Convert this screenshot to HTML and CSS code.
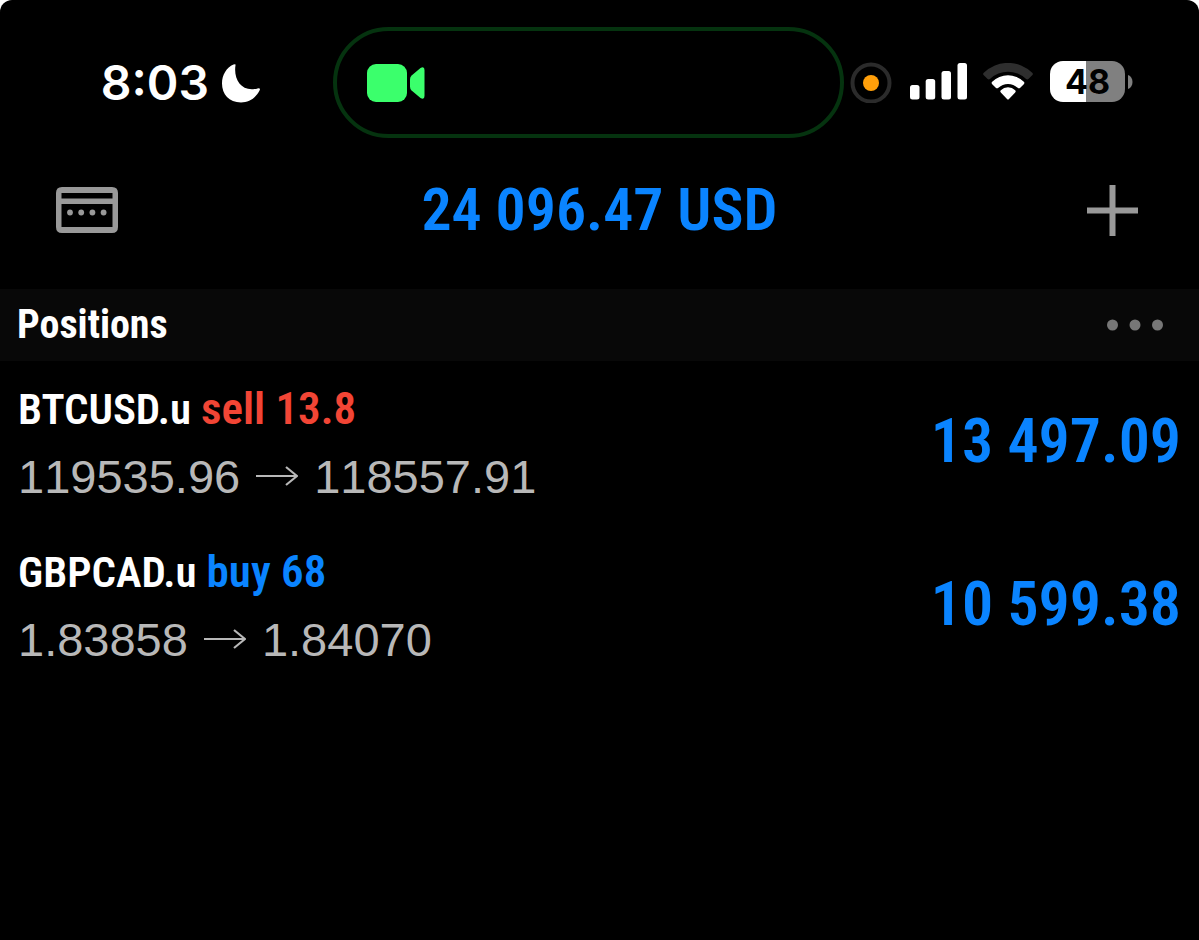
FILE: index.html
```html
<!DOCTYPE html>
<html lang="en">
<head>
<meta charset="utf-8">
<meta name="viewport" content="width=device-width, initial-scale=1">
<title>Positions</title>
<link rel="stylesheet" href="styles.css">
</head>
<body>
<div class="app">
  <div class="status">
    <div class="status-left">
      <time class="clock">8:03</time>
      <svg class="moon" width="40" height="40" viewBox="0 0 40 40" aria-label="Focus on"><path d="M14.500 2.200C12.500 15 19 27 32 26.200Q35 26 36.500 25.400Q39.500 24.500 38.800 27C35 35 28 39.500 20 39.500C8 39.500 1 31 1 20.500C1 12 5.500 4.500 12.500 1.500Q15 .5 14.500 2.200Z" fill="#fff"/></svg>
    </div>
    <div class="island">
      <svg width="58" height="38" viewBox="0 0 58 38" aria-label="Camera in use"><rect width="40" height="38" rx="9" fill="#3bff6c"/><path d="M43 15.500Q43 13 44.600 11.500L53.500 3.900Q57.500 2 57.500 6V32Q57.500 36 53.500 34.100L44.600 26.500Q43 25 43 22.500Z" fill="#3bff6c"/></svg>
    </div>
    <div class="status-right">
      <svg width="42" height="42" viewBox="0 0 42 42" aria-label="Microphone in use"><circle cx="21" cy="22" r="18.500" fill="none" stroke="#2b2b2b" stroke-width="4"/><circle cx="21" cy="22" r="8" fill="#ff9f0a"/></svg>
      <svg class="signal" width="58" height="37" viewBox="0 0 58 37" aria-label="Signal" fill="#fff"><rect y="22" width="9.500" height="14.500" rx="2.500"/><rect x="15.700" y="16" width="9.500" height="20.500" rx="2.500"/><rect x="31.500" y="8" width="9.500" height="28.500" rx="2.500"/><rect x="47.500" width="9.500" height="36.500" rx="2.500"/></svg>
      <svg class="wifi" width="50" height="38" viewBox="0 0 50 38" aria-label="Wi-Fi"><path d="M.8 9.800Q-.5 11 .8 12.300L4.600 16Q5.800 17 7.200 15.800A26 26 0 0 1 42.800 15.800Q44.200 17 45.400 16L49.200 12.300Q50.500 11 49.200 9.800A34.500 34.500 0 0 0 .8 9.800Z" fill="#2e2e2e"/><path d="M9.200 18.800Q8 20 9.200 21.200L13 25Q14 25.800 15.400 24.800A14 14 0 0 1 34.600 24.800Q36 25.800 37 25L40.800 21.200Q42 20 40.800 18.800A22.500 22.500 0 0 0 9.200 18.800Z" fill="#fff"/><path d="M17.800 27.200A10.500 10.500 0 0 1 32.200 27.200Q33.400 28.300 32.200 29.500L26 36Q25 37 24 36L17.800 29.500Q16.600 28.300 17.800 27.200Z" fill="#fff"/></svg>
      <div class="battery"><span class="battery-body">48</span><svg width="5" height="14" viewBox="0 0 5 14"><path d="M0 0C6 2 6 12 0 14Z" fill="#808080"/></svg></div>
    </div>
  </div>

  <header class="header">
    <button class="icon-button" type="button" aria-label="Accounts"><svg width="62" height="46" viewBox="0 0 62 46"><path d="M6 0H56Q62 0 62 6V40Q62 46 56 46H6Q0 46 0 40V6Q0 0 6 0ZM5.500 6V11.500H56.500V6ZM5.500 17V40H56.500V17Z" fill="#999" fill-rule="evenodd"/><g fill="#999"><circle cx="14" cy="25.500" r="2.900"/><circle cx="25.200" cy="25.500" r="2.900"/><circle cx="36.400" cy="25.500" r="2.900"/><circle cx="47.600" cy="25.500" r="2.900"/></g></svg></button>
    <h1 class="total">24 096.47 USD</h1>
    <button class="icon-button add" type="button" aria-label="Add"><svg width="51" height="51" viewBox="0 0 51 51"><path d="M0 25.500H51M25.500 0V51" stroke="#999" stroke-width="6"/></svg></button>
  </header>

  <main>
    <div class="section">
      <h2 class="section-title">Positions</h2>
      <button class="icon-button" type="button" aria-label="More"><svg width="56" height="12" viewBox="0 0 56 12" fill="#777"><circle cx="5.500" cy="6" r="5.500"/><circle cx="28" cy="6" r="5.500"/><circle cx="50.500" cy="6" r="5.500"/></svg></button>
    </div>
    <ul class="positions">
      <li class="position">
        <div>
          <div class="name">BTCUSD.u <span class="side sell">sell 13.8</span></div>
          <div class="prices"><span>119535.96</span><svg width="42" height="22" viewBox="0 0 42 22"><path d="M0 10H41M30 1L41 10L30 19" fill="none" stroke="#b8b8b8" stroke-width="2.200"/></svg><span>118557.91</span></div>
        </div>
        <div class="profit">13 497.09</div>
      </li>
      <li class="position">
        <div>
          <div class="name">GBPCAD.u <span class="side buy">buy 68</span></div>
          <div class="prices"><span>1.83858</span><svg width="42" height="22" viewBox="0 0 42 22"><path d="M0 10H41M30 1L41 10L30 19" fill="none" stroke="#b8b8b8" stroke-width="2.200"/></svg><span>1.84070</span></div>
        </div>
        <div class="profit">10 599.38</div>
      </li>
    </ul>
  </main>
</div>
</body>
</html>
```
FILE: styles.css
```css
* { box-sizing: border-box; }
body { margin: 0; background: #fff; }
h1, h2, ul { margin: 0; padding: 0; list-style: none; }
svg { display: block; flex: none; }

.app {
  min-height: 100vh;
  background: #000;
  color: #fff;
  border-radius: 12px 12px 0 0;
  font-family: "Roboto Condensed", Roboto, sans-serif;
}

.status {
  display: grid;
  grid-template-columns: 333fr 511fr 355fr;
  align-items: center;
  padding-top: 27px;
}
.status-left {
  display: flex;
  align-items: center;
  justify-content: flex-end;
  gap: 12px;
  padding-right: 72px;
}
.clock { font: 600 48px/56px Inter, sans-serif; }
.island {
  display: flex;
  align-items: center;
  height: 111px;
  padding-left: 30px;
  border: 4px solid #05330f;
  border-radius: 56px;
}
.status-right {
  display: flex;
  align-items: center;
  padding: 0 0 2px 6px;
}
.signal { margin-left: 18px; }
.wifi { margin-left: 15px; }
.battery {
  display: flex;
  align-items: center;
  gap: 3px;
  margin-left: 17px;
}
.battery-body {
  width: 75px;
  border-radius: 13px;
  background: linear-gradient(90deg, #fff 48%, #808080 48%);
  color: #000;
  font: 700 34px/41px Inter, sans-serif;
  text-align: center;
}

.header {
  display: grid;
  grid-template-columns: 1fr auto 1fr;
  align-items: center;
  padding: 33px 56px 40px;
}
.icon-button {
  padding: 0;
  border: 0;
  background: none;
  justify-self: start;
}
.add { justify-self: end; margin-right: 5px; }
.total {
  color: #0a84ff;
  font-size: 60px;
  font-weight: 600;
  line-height: 78px;
}

.section {
  display: flex;
  align-items: center;
  justify-content: space-between;
  padding: 0 36px 0 17px;
  background: #080808;
}
.section-title { font-size: 40px; line-height: 72px; }

.position {
  display: flex;
  align-items: center;
  justify-content: space-between;
  padding: 14px 18px;
}
.name { font-size: 43px; font-weight: 600; line-height: 67px; }
.side { font-size: 45px; }
.sell { color: #f24535; }
.buy { color: #0a84ff; }
.prices {
  display: flex;
  align-items: center;
  gap: 16px;
  color: #b8b8b8;
  font: 47px/67px "Liberation Sans", sans-serif;
  font-kerning: none;
}
.profit {
  padding-bottom: 4px;
  color: #0a84ff;
  font-size: 62px;
  font-weight: 600;
}
```
